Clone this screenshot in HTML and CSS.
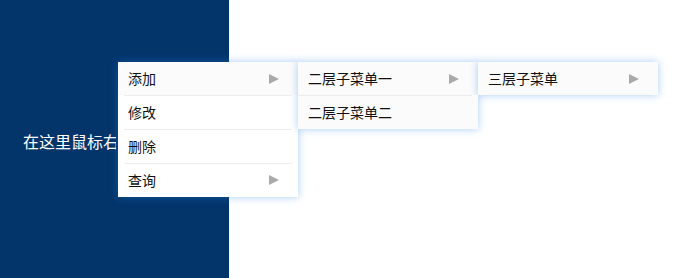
FILE: index.html
```html
<!DOCTYPE html>
<html lang="zh">
<head>
<meta charset="utf-8">
<link rel="stylesheet" href="styles.css">
</head>
<body>
<div class="stage">
  <div class="panel"><span class="hint">在这里鼠标右键点击</span></div>
  <ul class="menu menu-root">
    <li class="item active has-sub">添加<span class="arrow"></span>
      <ul class="menu sub">
        <li class="item active has-sub">二层子菜单一<span class="arrow"></span>
          <ul class="menu sub">
            <li class="item active has-sub">三层子菜单<span class="arrow"></span></li>
          </ul>
        </li>
        <li class="item active">二层子菜单二</li>
      </ul>
    </li>
    <li class="item">修改</li>
    <li class="item">删除</li>
    <li class="item has-sub">查询<span class="arrow"></span></li>
  </ul>
</div>
</body>
</html>
```
FILE: styles.css
```css
html, body {
  margin: 0;
  padding: 0;
  background: #fff;
  font-family: "Noto Sans CJK SC", "Noto Sans", sans-serif;
}
.stage {
  position: relative;
  width: 683px;
  height: 278px;
  overflow: hidden;
}
.panel {
  width: 229px;
  height: 278px;
  background: #03356b;
  display: flex;
  align-items: center;
  padding-left: 23px;
  box-sizing: border-box;
}
.hint {
  color: #fff;
  font-size: 16px;
  white-space: nowrap;
  margin-top: 4px;
  max-width: 93px;
  overflow: hidden;
}
.menu {
  list-style: none;
  margin: 0;
  padding: 0;
  width: 180px;
  background: #fff;
  box-shadow: 0 0 8px rgba(40, 130, 235, 0.4);
}
.menu-root {
  position: absolute;
  left: 118px;
  top: 62px;
}
.sub {
  position: absolute;
  left: 100%;
  top: 0;
}
.item {
  position: relative;
  height: 34px;
  line-height: 33px;
  padding: 0 10px;
  font-size: 14px;
  color: #111;
  box-sizing: border-box;
  display: flex;
  align-items: center;
  justify-content: space-between;
}
.item + .item::before {
  content: "";
  position: absolute;
  left: 6px;
  right: 6px;
  top: 0;
  height: 1px;
  background: #ececec;
}
.sub .item + .item::before {
  left: 0;
}
.item:first-child {
  height: 33px;
}
.item.active {
  background: #fbfbfb;
}
.arrow {
  width: 0;
  height: 0;
  border-left: 10px solid #aaa;
  border-top: 5px solid transparent;
  border-bottom: 5px solid transparent;
  margin-right: 9px;
}
```
